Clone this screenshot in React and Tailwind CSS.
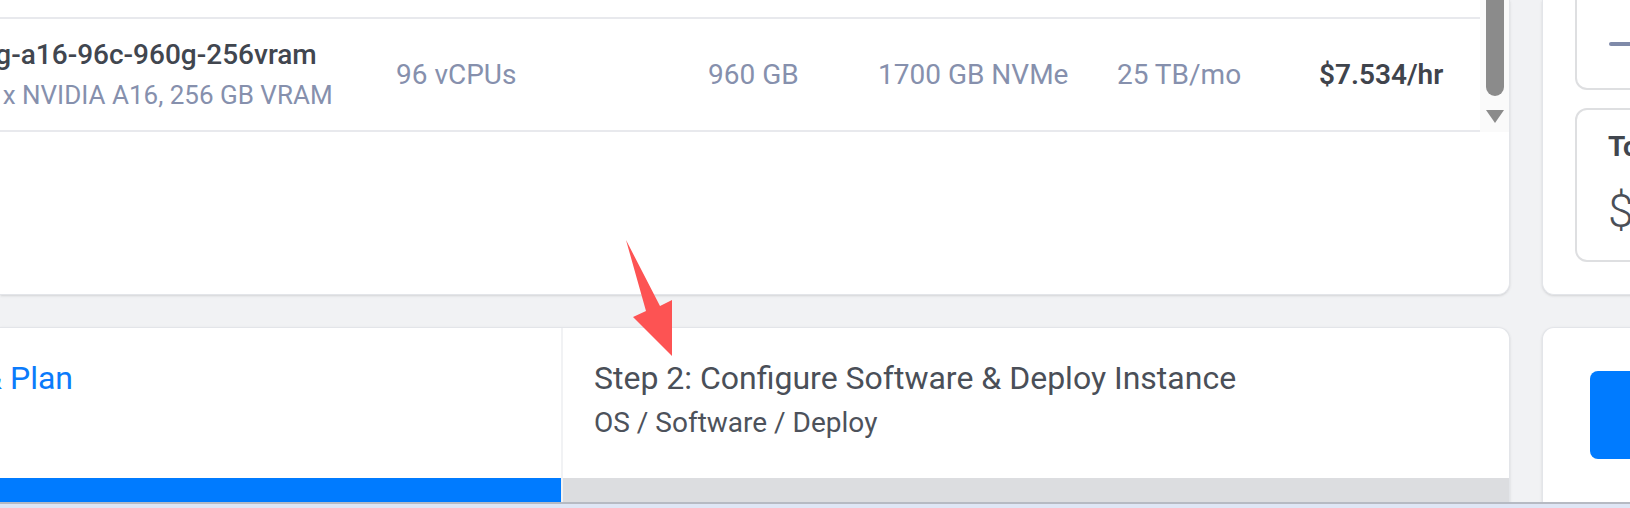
const cell = "text-[28px] leading-[1.2] text-[#8690ad]";

const ServerRow = () => (
  <div className="-ml-[33px] grid grid-cols-[429px_312px_170px_239px_202px_1fr] items-center h-[115px] border-y-2 border-[#e8e9ed]">
    <div className="whitespace-nowrap">
      <div className="text-[28px] leading-[1.2] font-medium text-[#41464f]">vcg-a16-96c-960g-256vram</div>
      <div className="mt-[8px] text-[26px] leading-[1.2] text-[#8690ad]">16 x NVIDIA A16, 256 GB VRAM</div>
    </div>
    <div className={cell}>96 vCPUs</div>
    <div className={cell}>960 GB</div>
    <div className={cell}>1700 GB NVMe</div>
    <div className={cell}>25 TB/mo</div>
    <div className="text-[28px] leading-[1.2] font-semibold text-[#3f444c]">$7.534/hr</div>
  </div>
);

const Scrollbar = () => (
  <div className="w-[29px] h-[132px] shrink-0 bg-[#fafafa] flex flex-col items-center">
    <div className="w-[18px] h-[96px] rounded-b-full bg-[#8b8b8b]" />
    <svg className="mt-[13px]" width="18" height="14" viewBox="0 0 18 14">
      <polygon points="0,1 18,1 9,14" fill="#8b8b8b" />
    </svg>
  </div>
);

export default function App() {
  return (
    <div className="relative w-[1630px] h-[508px] overflow-hidden bg-[#f1f2f4] font-['Roboto',sans-serif] flex flex-col">
      <div className="flex h-[502px] gap-[32px]">
        {/* main column */}
        <div className="w-[1510px] shrink-0 flex flex-col gap-[32px]">
          <div className="h-[295px] shrink-0 bg-white rounded-br-xl border-r border-b border-[#e3e5e9] shadow-sm">
            <div className="flex">
              <div className="flex-1 min-w-0 pt-[17px]">
                <ServerRow />
              </div>
              <Scrollbar />
            </div>
          </div>

          <div className="flex-1 flex bg-white rounded-tr-xl border-t border-r border-[#e3e5e9] shadow-sm">
            <div className="w-[561px] shrink-0 flex flex-col">
              <div className="flex-1 pt-[31px]">
                <div className="w-[73px] flex justify-end whitespace-nowrap text-[32px] leading-[1.2] text-[#0b7bfb]">
                  Step 1: Choose Server Type &amp; Plan
                </div>
              </div>
              <div className="h-[24px] bg-[#007bff]" />
            </div>
            <div className="flex-1 flex flex-col border-l-2 border-[#f1f2f4]">
              <div className="flex-1 pt-[31px] pl-[31px]">
                <div className="text-[32px] leading-[1.2] text-[#4a4f58]">Step 2: Configure Software &amp; Deploy Instance</div>
                <div className="mt-[9px] text-[28px] leading-[1.2] text-[#4d525b]">OS / Software / Deploy</div>
              </div>
              <div className="h-[24px] bg-[#dcdde0]" />
            </div>
          </div>
        </div>

        {/* summary column */}
        <div className="w-[300px] shrink-0 flex flex-col gap-[32px]">
          <div className="h-[295px] shrink-0 bg-white rounded-bl-xl border-l border-b border-[#e3e5e9] shadow-sm pl-[32px] pb-[32px] flex flex-col gap-[18px]">
            <div className="h-[90px] shrink-0 border-2 border-t-0 border-[#dedfe1] rounded-b-xl flex items-center pl-[32px]">
              <div className="w-[60px] h-[4px] rounded-full bg-[#7f8aa9]" />
            </div>
            <div className="flex-1 border-2 border-[#dedfe1] rounded-xl pt-[20px] pl-[31px] whitespace-nowrap">
              <div className="text-[28px] leading-[1.2] font-bold text-[#41464e]">Total Cost</div>
              <div className="mt-[20px] text-[46px] leading-[1.2] font-light text-[#4a4f58]">$7.534</div>
            </div>
          </div>
          <div className="flex-1 bg-white rounded-tl-xl border-l border-t border-[#e3e5e9] shadow-sm pt-[43px] pl-[47px]">
            <div className="h-[88px] rounded-lg bg-[#007bff]" />
          </div>
        </div>
      </div>
      <div className="h-[6px] border-t-2 border-[#b6bac3] bg-[#dfe6f5]" />

      {/* annotation arrow */}
      <svg className="absolute left-0 top-0 pointer-events-none" width="1630" height="508">
        <polygon points="626,240 660,306 672,300 672,356 633,317 646,311" fill="#fd5353" />
      </svg>
    </div>
  );
}
